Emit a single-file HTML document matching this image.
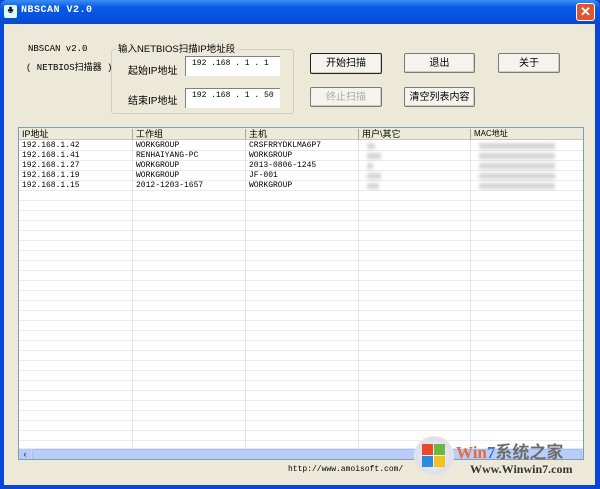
<!DOCTYPE html>
<html><head><meta charset="utf-8"><style>
*{margin:0;padding:0;box-sizing:border-box}
body{width:600px;height:489px;overflow:hidden;background:#0a46d6;font-family:"Liberation Mono","Noto Sans CJK SC",monospace;font-size:9px;position:relative}
.a{position:absolute}
#title{left:0;top:0;width:600px;height:24px;background:linear-gradient(#3d8ef6,#0a5ae6 30%,#0553e0 70%,#0a46c8);border-radius:7px 7px 0 0}
#client{left:4px;top:24px;width:591px;height:461px;background:#ece9d8}
.btn{position:absolute;background:#f4f3ee;border:1px solid #7a7a7a;border-radius:2px;text-align:center;font-family:"Liberation Sans","Noto Sans CJK SC",sans-serif;font-size:10px;line-height:19px;color:#000;box-shadow:inset -1px -1px 0 #d0cdbf}
.edit{position:absolute;background:#fff;border-top:1px solid #808080;border-left:1px solid #808080;font-size:8px;padding:2px 0 0 6px;white-space:pre;overflow:hidden}
.lbl{position:absolute;font-family:"Liberation Sans","Noto Sans CJK SC",sans-serif;font-size:10px;white-space:nowrap}
.row{position:absolute;left:0;width:563px;height:10px}
.cell{position:absolute;top:0;font-size:8px;line-height:10px;white-space:nowrap}
.vl{position:absolute;top:0;width:1px;height:320px;background:#e4e4e4}
.blur{position:absolute;background:#888;filter:blur(1.5px);opacity:.35;height:6px}
</style></head><body>
<div id="title" class="a"></div>
<div class="a" style="left:4px;top:5px;width:13px;height:13px;background:#dfe;border-radius:2px;color:#114;font-size:11px;line-height:13px;text-align:center;font-weight:bold">♣</div>
<div class="a" style="left:21px;top:5px;color:#fff;font-weight:bold;font-size:10px;letter-spacing:0.5px">NBSCAN V2.0</div>
<div class="a" style="left:576px;top:3px;width:19px;height:18px;background:#e0552f;border:1px solid #fff;border-radius:3px;color:#fff;font:bold 13px 'Liberation Sans';text-align:center;line-height:16px">✕</div>
<div id="client" class="a">
<div class="lbl" style="left:24px;top:20px;font-family:'Liberation Mono','Noto Sans CJK SC',monospace;font-size:9px">NBSCAN v2.0</div>
<div class="lbl" style="left:22px;top:36px;font-family:'Liberation Mono','Noto Sans CJK SC',monospace;font-size:9px">( NETBIOS扫描器 )</div>
<div class="a" style="left:107px;top:25px;width:183px;height:65px;border:1px solid #d0d0bf;border-radius:3px"></div>
<div class="lbl" style="left:112px;top:17px;background:#ece9d8;padding:0 2px;font-size:9.5px">输入NETBIOS扫描IP地址段</div>
<div class="lbl" style="left:124px;top:38px">起始IP地址</div>
<div class="lbl" style="left:124px;top:68px">结束IP地址</div>
<div class="edit" style="left:181px;top:32px;width:95px;height:20px">192 .168 . 1 . 1</div>
<div class="edit" style="left:181px;top:64px;width:95px;height:20px">192 .168 . 1 . 50</div>
<div class="btn" style="left:306px;top:29px;width:72px;height:21px;border:1px solid #222">开始扫描</div>
<div class="btn" style="left:400px;top:29px;width:71px;height:20px">退出</div>
<div class="btn" style="left:494px;top:29px;width:62px;height:20px">关于</div>
<div class="btn" style="left:306px;top:63px;width:72px;height:20px;color:#aaa">终止扫描</div>
<div class="btn" style="left:400px;top:63px;width:71px;height:20px">清空列表内容</div>
<div class="a" style="left:14px;top:103px;width:566px;height:333px;background:#fff;border:1px solid #7f9db9;overflow:hidden">
 <div class="a" style="left:0;top:0;width:566px;height:12px;background:#ebeadb;border-bottom:1px solid #c8c5b0;font-family:'Liberation Sans','Noto Sans CJK SC',sans-serif;font-size:9px;line-height:12px">
  <span class="a" style="left:3px">IP地址</span><span class="a" style="left:117px">工作组</span><span class="a" style="left:230px">主机</span><span class="a" style="left:343px">用户\其它</span><span class="a" style="left:455px;font-size:8px">MAC地址</span>
  <div class="a" style="left:113px;top:1px;width:1px;height:10px;background:#aca899"></div><div class="a" style="left:226px;top:1px;width:1px;height:10px;background:#aca899"></div><div class="a" style="left:339px;top:1px;width:1px;height:10px;background:#aca899"></div><div class="a" style="left:451px;top:1px;width:1px;height:10px;background:#aca899"></div>
 </div>
 <div class="a" style="left:0;top:13px;width:566px;height:310px;background:repeating-linear-gradient(#fff 0 9px,#eaeaea 9px 10px)"></div>
 <div class="vl" style="left:113px;top:12px"></div><div class="vl" style="left:226px;top:12px"></div><div class="vl" style="left:339px;top:12px"></div><div class="vl" style="left:451px;top:12px"></div>
 <div class="a" style="left:0;top:13px;width:566px">
  <div class="row" style="top:0"><span class="cell" style="left:3px">192.168.1.42</span><span class="cell" style="left:117px">WORKGROUP</span><span class="cell" style="left:230px">CRSFRRYDKLMA6P7</span></div>
  <div class="row" style="top:10px"><span class="cell" style="left:3px">192.168.1.41</span><span class="cell" style="left:117px">RENHAIYANG-PC</span><span class="cell" style="left:230px">WORKGROUP</span></div>
  <div class="row" style="top:20px"><span class="cell" style="left:3px">192.168.1.27</span><span class="cell" style="left:117px">WORKGROUP</span><span class="cell" style="left:230px">2013-0806-1245</span></div>
  <div class="row" style="top:30px"><span class="cell" style="left:3px">192.168.1.19</span><span class="cell" style="left:117px">WORKGROUP</span><span class="cell" style="left:230px">JF-001</span></div>
  <div class="row" style="top:40px"><span class="cell" style="left:3px">192.168.1.15</span><span class="cell" style="left:117px">2012-1203-1657</span><span class="cell" style="left:230px">WORKGROUP</span></div>
 </div>
 <div class="blur" style="left:348px;top:15px;width:8px"></div><div class="blur" style="left:348px;top:25px;width:14px"></div><div class="blur" style="left:348px;top:35px;width:6px"></div><div class="blur" style="left:348px;top:45px;width:14px"></div><div class="blur" style="left:348px;top:55px;width:12px"></div>
 <div class="blur" style="left:460px;top:15px;width:76px"></div><div class="blur" style="left:460px;top:25px;width:76px"></div><div class="blur" style="left:460px;top:35px;width:76px"></div><div class="blur" style="left:460px;top:45px;width:76px"></div><div class="blur" style="left:460px;top:55px;width:76px"></div>
 <div class="a" style="left:0;top:320px;width:566px;height:12px;background:#c6d6f8;border-top:1px solid #e0e8fb">
  <div class="a" style="left:0;top:0;width:12px;height:11px;background:#b7cbf5;color:#2b4a9a;font:bold 9px 'Liberation Sans';text-align:center;line-height:11px">‹</div>
  <div class="a" style="left:13px;top:0;width:550px;height:11px;background:#b9cdf8;border:1px solid #a8bfee;border-radius:2px"></div>
 </div>
</div>
<div class="a" style="left:284px;top:441px;font-size:8px">http://www.amoisoft.com/</div>
<div class="a" style="left:410px;top:412px;width:40px;height:40px;border-radius:50%;background:radial-gradient(#fff,#dde 60%,#ece9d8 72%)"></div>
<div class="a" style="left:418px;top:420px;width:11px;height:11px;background:#e84a2a"></div><div class="a" style="left:430px;top:420px;width:11px;height:11px;background:#6bb83c"></div>
<div class="a" style="left:418px;top:432px;width:11px;height:11px;background:#2a8ae0"></div><div class="a" style="left:430px;top:432px;width:11px;height:11px;background:#f3c11b"></div>
<div class="a" style="left:452px;top:414px;font:bold 17px 'Liberation Serif','Noto Sans CJK SC',serif;color:#e86a3a;white-space:nowrap">Win<span style="color:#3a78d0">7</span><span style="color:#6d6d6d;font-family:'Noto Sans CJK SC'">系统之家</span></div>
<div class="a" style="left:466px;top:438px;font:bold 12px 'Liberation Serif',serif;color:#333;white-space:nowrap">Www.Winwin7.com</div>
</div>
</body></html>
